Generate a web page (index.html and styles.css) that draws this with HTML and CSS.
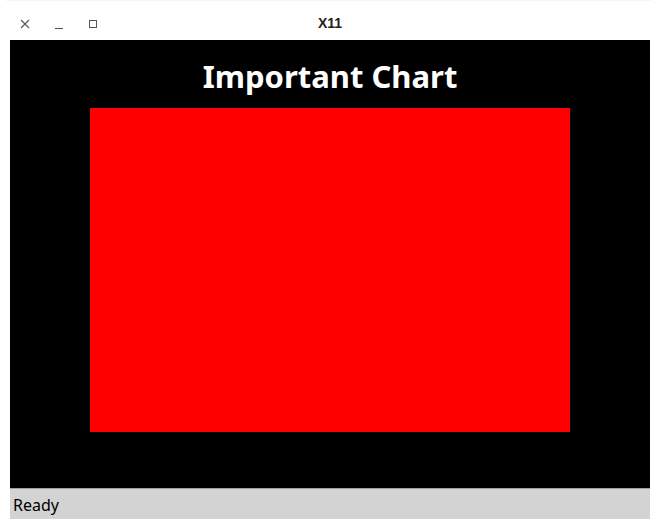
FILE: index.html
```html
<!DOCTYPE html>
<html>
<head>
<meta charset="utf-8">
<link rel="stylesheet" href="styles.css">
</head>
<body>
<div class="window">
  <div class="titlebar">
    <div class="controls">
      <svg class="ctl" width="12" height="12" viewBox="0 0 12 12"><path d="M2 2 L10 10 M10 2 L2 10" stroke="#555" stroke-width="1.1" fill="none"/></svg>
      <svg class="ctl" width="12" height="12" viewBox="0 0 12 12"><path d="M2 10.5 H10" stroke="#555" stroke-width="1.1" fill="none"/></svg>
      <svg class="ctl" width="12" height="12" viewBox="0 0 12 12"><rect x="2.5" y="2.5" width="7" height="7" stroke="#555" stroke-width="1" fill="none"/></svg>
    </div>
    <div class="title">X11</div>
  </div>
  <div class="content">
    <div class="chart-title">Important Chart</div>
    <div class="plot"></div>
  </div>
  <div class="status">Ready</div>
</div>
</body>
</html>
```
FILE: styles.css
```css
html, body {
  margin: 0;
  padding: 0;
  background: #fff;
}
.window {
  width: 660px;
  height: 530px;
  background: #fff;
  border-radius: 12px 12px 0 0;
  box-shadow: inset 0 1px 0 -0.5px #eee;
  box-sizing: border-box;
  display: flex;
  flex-direction: column;
  padding: 0 10px;
}
.titlebar {
  height: 40px;
  position: relative;
  display: flex;
  align-items: center;
}
.controls {
  display: flex;
  gap: 22px;
  padding-left: 9px;
  padding-top: 7px;
}
.ctl { display: block; }
.title {
  position: absolute;
  left: 0;
  right: 0;
  top: 15px;
  text-align: center;
  font-family: "Liberation Sans", sans-serif;
  font-weight: bold;
  font-size: 14px;
  color: #222;
}
.content {
  background: #000;
  height: 448px;
  display: flex;
  flex-direction: column;
  align-items: center;
}
.chart-title {
  font-family: "Noto Sans", sans-serif;
  font-weight: bold;
  font-size: 31px;
  color: #fff;
  line-height: 40px;
  margin-top: 16px;
  margin-bottom: 12px;
}
.plot {
  width: 480px;
  height: 324px;
  background: #f00;
}
.status {
  background: #d3d3d3;
  border-top: 1px solid #a0a0a0;
  height: 31px;
  box-sizing: border-box;
  font-family: "Noto Sans", sans-serif;
  font-size: 16px;
  color: #000;
  padding-left: 3px;
  line-height: 32px;
}
```
